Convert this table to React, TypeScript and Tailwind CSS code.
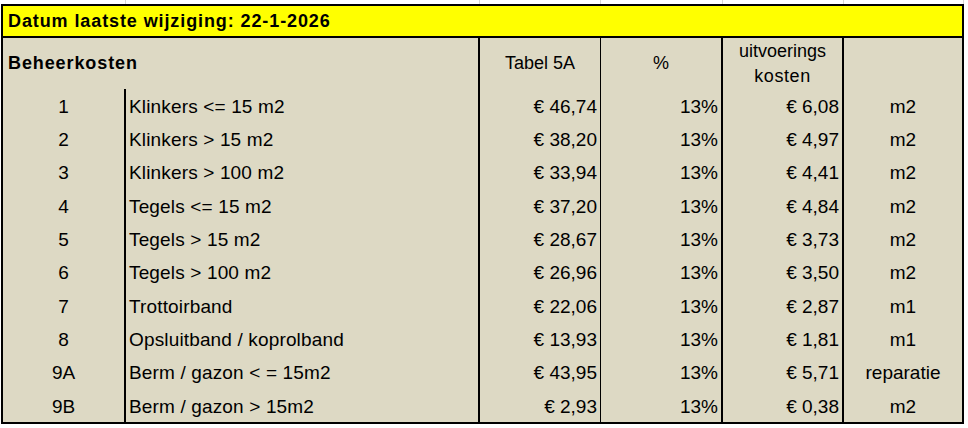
const rows: [string, string, string, string, string, string][] = [
  ['1', 'Klinkers <= 15 m2', '€ 46,74', '13%', '€ 6,08', 'm2'],
  ['2', 'Klinkers > 15 m2', '€ 38,20', '13%', '€ 4,97', 'm2'],
  ['3', 'Klinkers > 100 m2', '€ 33,94', '13%', '€ 4,41', 'm2'],
  ['4', 'Tegels <= 15 m2', '€ 37,20', '13%', '€ 4,84', 'm2'],
  ['5', 'Tegels > 15 m2', '€ 28,67', '13%', '€ 3,73', 'm2'],
  ['6', 'Tegels > 100 m2', '€ 26,96', '13%', '€ 3,50', 'm2'],
  ['7', 'Trottoirband', '€ 22,06', '13%', '€ 2,87', 'm1'],
  ['8', 'Opsluitband / koprolband', '€ 13,93', '13%', '€ 1,81', 'm1'],
  ['9A', 'Berm / gazon < = 15m2', '€ 43,95', '13%', '€ 5,71', 'reparatie'],
  ['9B', 'Berm / gazon > 15m2', '€ 2,93', '13%', '€ 0,38', 'm2'],
];

const cols = 'grid grid-cols-[123px_354px_121px_122px_121px_118px]';

export default function App() {
  return (
    <div className="w-[968px] h-[428px] bg-white pl-[1px] font-['Liberation_Sans',Arial,sans-serif] text-black">
      {/* sheet gridlines peeking above the table */}
      <div className="h-[4px] pl-[2px] grid grid-cols-[123px_354px_121px_122px_121px_120px]">
        <div className="border-r border-[#d6d6d6]" />
        <div className="border-r border-[#d6d6d6]" />
        <div className="border-r border-[#d6d6d6]" />
        <div className="border-r border-[#d6d6d6]" />
        <div className="border-r border-[#d6d6d6]" />
        <div className="border-r border-[#d6d6d6]" />
      </div>

      <div className="w-[963px] border-2 border-black bg-[#ddd9c4]">
        {/* title */}
        <div className="h-[32px] bg-[#ffff00] border-b-2 border-black flex items-center pl-[5px] pt-[1px] text-[18px] font-bold tracking-[0.9px]">
          Datum laatste wijziging: 22-1-2026
        </div>

        {/* header */}
        <div className={`${cols} h-[51px] text-[18px]`}>
          <div className="col-span-2 border-r-2 border-black flex items-center pl-[5px] font-bold tracking-[0.9px]">
            Beheerkosten
          </div>
          <div className="border-r border-black flex items-center justify-center">Tabel 5A</div>
          <div className="border-r-2 border-black flex items-center justify-center">%</div>
          <div className="border-r-2 border-black flex flex-col items-center justify-center leading-[25px]">
            <span>uitvoerings</span>
            <span className="tracking-[0.6px]">kosten</span>
          </div>
          <div />
        </div>

        {/* body */}
        <div className="grid grid-rows-[repeat(10,1fr)] h-[333px] text-[19px]">
          {rows.map(([nr, omschrijving, tabel, pct, kosten, eenheid]) => (
            <div key={nr} className={cols}>
              <div className="border-r-2 border-black flex items-center justify-center pt-[3px]">{nr}</div>
              <div className="border-r-2 border-black flex items-center pl-[3px] pt-[3px] tracking-[0.15px]">{omschrijving}</div>
              <div className="border-r border-black flex items-center justify-end pr-[3px] pt-[3px]">{tabel}</div>
              <div className="border-r-2 border-black flex items-center justify-end pr-[3px] pt-[3px]">{pct}</div>
              <div className="border-r-2 border-black flex items-center justify-end pr-[3px] pt-[3px]">{kosten}</div>
              <div className="flex items-center justify-center pt-[3px]">{eenheid}</div>
            </div>
          ))}
        </div>
      </div>
    </div>
  );
}
